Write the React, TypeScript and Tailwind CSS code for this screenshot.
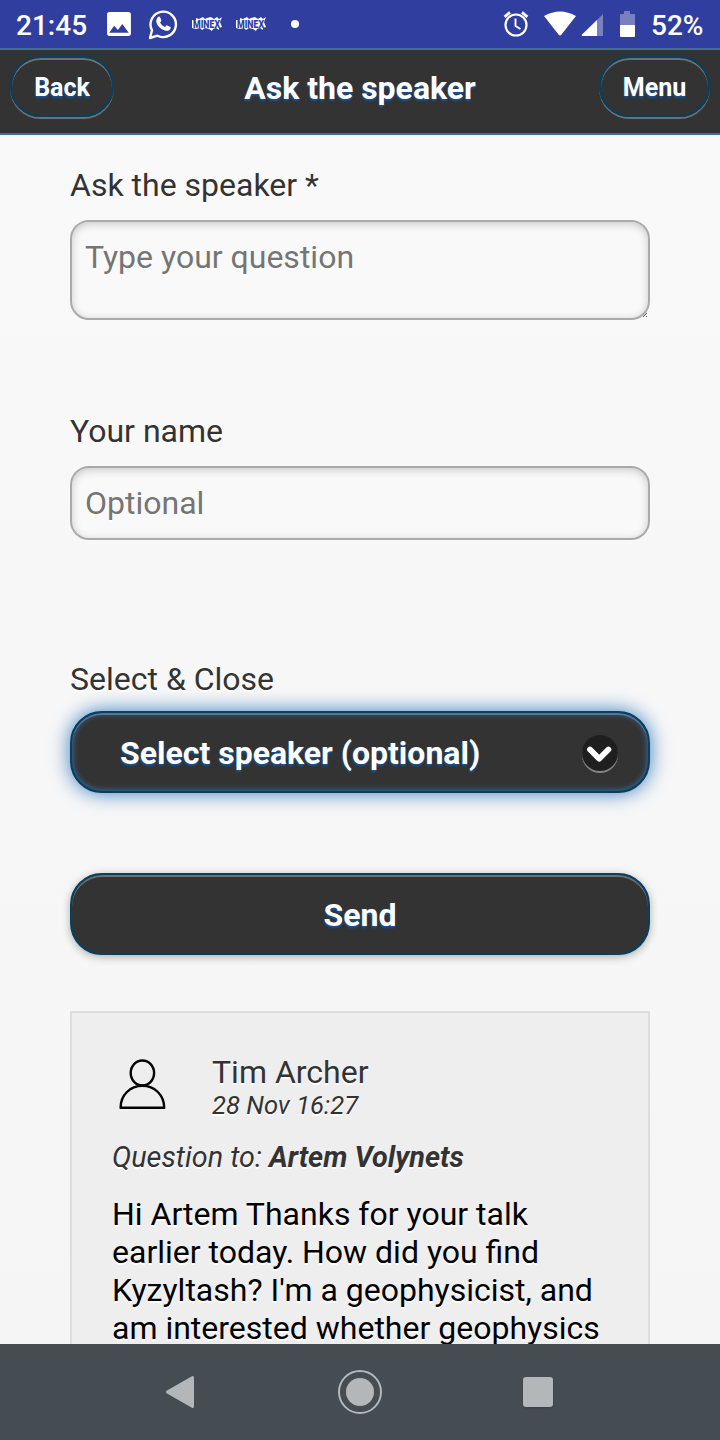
import React from "react";

const darkShadow = "[text-shadow:0_2px_2px_#145399]";
const lightShadow = "[text-shadow:0_2px_0_#fff]";

function MinexIcon() {
  return (
    <svg className="overflow-visible" width="32" height="16" viewBox="0 0 32 16">
      <path d="M1 4H5V2L8 3 12 1 14 3 16 2 20 1 23 3 26 1 28 3 31 1 29 6 31 11 28 12 28 14 25 12 22 13 21 15 18 13 14 12 11 14 9 12 5 13 1 12Z" fill="#fff" />
      <text x="2" y="11.500" fontFamily="Roboto, sans-serif" fontWeight="900" fontSize="10.500" textLength="27" lengthAdjust="spacingAndGlyphs" fill="#303f9f">MINEX</text>
    </svg>
  );
}

function StatusBar() {
  return (
    <div className="flex h-12 shrink-0 items-center bg-[#303f9f] text-white">
      <div className="ml-4 w-[72px] pt-[3px] text-[28px] leading-[34px] font-medium whitespace-nowrap">21:45</div>
      <svg className="ml-[18px]" width="26" height="26" viewBox="0 0 24 24" fill="#fff">
        <path d="M23 21V3c0-1.100-.9-2-2-2H3C1.900 1 1 1.900 1 3v18c0 1.100.9 2 2 2h18c1.100 0 2-.9 2-2zM7.500 13.500l3.500 4 4-5.500L21 20H3z" />
      </svg>
      <svg className="ml-4" width="30" height="32" viewBox="0 0 30 32" fill="none">
        <path d="M2 30 4 22.300A12.700 12.700 0 1 1 9.500 27.700Z" stroke="#fff" strokeWidth="2.400" strokeLinejoin="round" />
        <path d="M9.800 9.200c.7-.8 1.900-.8 2.300.1l1.200 2.900c.2.500-.1 1-1.200 2.200 1.100 2.100 2.800 3.600 5 4.600 1.300-1.700 1.600-1.900 2.200-1.600l2.700 1.300c.8.400.8.700.6 1.500-.7 2.300-3.200 3.100-5.700 2.300-4.300-1.300-7-4.300-8.300-7.600-.7-2-.3-4.200 1.200-5.700Z" fill="#fff" />
      </svg>
      <div className="ml-[13px] flex gap-3"><MinexIcon /><MinexIcon /></div>
      <div className="ml-6 size-2 rounded-full bg-white" />
      <svg className="ml-auto" width="26" height="28" viewBox="0 0 26 28" fill="none" stroke="#fff">
        <circle cx="13" cy="15" r="10.500" strokeWidth="2.200" />
        <path d="M12.500 8.500V16L17.500 19" strokeWidth="1.900" />
        <path d="M1.600 6.800 7 2.300M24.400 6.800 19 2.300" strokeWidth="2.800" />
      </svg>
      <svg className="ml-[15px]" width="32" height="26" viewBox="0 0 32 26">
        <path d="M0 5Q16-4 32 5L17.500 23.500Q16 25.500 14.500 23.500Z" fill="#fff" />
      </svg>
      <svg className="mt-[2px] ml-[5px]" width="23" height="24" viewBox="0 0 23 24">
        <path d="M22 1v22h-6V7Z" fill="#7980bd" />
        <path d="M16 7v16H1.500Q0 22.500 1 21.500Z" fill="#fff" />
      </svg>
      <svg className="ml-4" width="15" height="27" viewBox="0 0 15 27">
        <path d="M0 4q0-1 1-1h3V0h6v3h4q1 0 1 1v10H0Z" fill="#7980bd" />
        <path d="M0 14h15v11q0 1-1 1H1q-1 0-1-1Z" fill="#fff" />
      </svg>
      <div className="mr-4 ml-4 w-[53px] pt-[3px] text-[28px] leading-[34px] font-medium whitespace-nowrap">52%</div>
    </div>
  );
}

function HeaderButton({ label, className }: { label: string; className: string }) {
  return (
    <button className={`mt-[6px] h-[61px] rounded-[31px] border-2 border-[#044062] pt-[2px] text-[25px] font-bold shadow-[0_2px_0_rgba(255,255,255,0.3),inset_0_2px_0_rgba(255,255,255,0.3)] ${darkShadow} ${className}`}>
      {label}
    </button>
  );
}

function Header() {
  return (
    <header className="flex h-[87px] shrink-0 items-start justify-between border-y-2 border-[#456f9a] bg-[#333] px-[10px] text-white">
      <HeaderButton label="Back" className="w-[104px]" />
      <h1 className={`mt-[19px] ml-[7px] text-[32px] leading-[38px] font-bold ${darkShadow}`}>Ask the speaker</h1>
      <HeaderButton label="Menu" className="w-[111px]" />
    </header>
  );
}

const fieldClass = `block w-full rounded-[19px] border-2 border-[#aaa] bg-[#f9f9f9] px-[13px] text-[32px] leading-[38px] text-[#333] shadow-[inset_0_2px_8px_rgba(0,0,0,0.2)] outline-none placeholder:text-[#757575] ${lightShadow}`;

export default function App() {
  return (
    <div className="flex h-[1440px] w-[720px] flex-col overflow-hidden bg-[#f9f9f9] font-[Roboto,sans-serif]">
      <StatusBar />
      <Header />
      <main className={`min-h-0 flex-1 overflow-hidden bg-linear-to-b from-[#f9f9f9] to-[#f5f5f5] px-[70px] pt-[31px] text-[32px] leading-[38px] text-[#333] ${lightShadow}`}>
        <label className="block h-[54px]">Ask the speaker *</label>
        <div className="relative">
          <textarea className={`${fieldClass} h-[100px] resize-none pt-[16px]`} placeholder="Type your question" />
          <svg className="absolute right-[3px] bottom-[3px]" width="4" height="4" viewBox="0 0 4 4" shapeRendering="crispEdges">
            <path d="M0 3h1v1H0zM1 2h1v1H1zM2 1h1v1H2zM3 0h1v1H3zM3 3h1v1H3z" fill="#555" />
          </svg>
        </div>
        <label className="mt-[92px] block h-[54px]">Your name</label>
        <input className={`${fieldClass} h-[74px]`} placeholder="Optional" />
        <label className="mt-[120px] block h-[51px]">Select &amp; Close</label>
        <button className={`flex h-[82px] w-full items-center rounded-[32px] border-2 border-[#044062] bg-[#333] pt-[2px] pr-[30px] pl-[48px] text-left font-bold text-white shadow-[inset_0_0_6px_#387bbe,0_0_20px_#387bbe,inset_0_2px_0_rgba(255,255,255,0.3)] ${darkShadow}`}>
          <span className="flex-1">Select speaker (optional)</span>
          <span className="flex size-9 items-center justify-center rounded-full bg-[#1f1f1f] shadow-[0_2px_0_rgba(255,255,255,0.4)]">
            <svg width="36" height="36" viewBox="0 0 36 36" fill="none">
              <path d="m8 14.500 9.200 9.200 9.200-9.200" stroke="#fff" strokeWidth="5.800" strokeLinejoin="round" strokeLinecap="round" />
            </svg>
          </span>
        </button>
        <button className={`mt-20 block h-[82px] w-full rounded-[32px] border-2 border-[#044062] bg-[#333] pt-[2px] font-bold text-white shadow-[0_2px_8px_rgba(0,0,0,0.3),inset_0_2px_0_rgba(255,255,255,0.3)] ${darkShadow}`}>
          Send
        </button>
        <article className="mt-14 h-[400px] border-2 border-[#ddd] bg-[#eee] px-10 pt-[40px]">
          <div className="flex h-[66px]">
            <svg className="mt-[6px] ml-[7px]" width="47" height="51" viewBox="0 0 47 51" fill="none" stroke="#000" strokeWidth="2.400">
              <ellipse cx="23.400" cy="14" rx="11.700" ry="12.500" />
              <path d="M1.600 48.800C1.600 36 11.200 26.800 23.400 26.800S45.200 36 45.200 48.800Z" strokeLinejoin="round" />
            </svg>
            <div className="ml-[46px]">
              <div>Tim Archer</div>
              <div className="text-[25.6px] leading-[29px] italic">28 Nov 16:27</div>
            </div>
          </div>
          <p className="mt-[20px] text-[28.8px] leading-[36px] italic">
            Question to: <strong className="font-bold">Artem Volynets</strong>
          </p>
          <p className="mt-[20px] text-black">
            Hi Artem Thanks for your talk<br />earlier today. How did you find<br />Kyzyltash? I'm a geophysicist, and<br />am interested whether geophysics
          </p>
        </article>
      </main>
      <nav className="flex h-24 shrink-0 items-center bg-[#454d52]">
        <svg className="ml-[165px]" width="30" height="34" viewBox="0 0 30 34"><path d="M2 15.500 26.500 1.500Q29-.2 29 3v28q0 3.200-2.500 1.500L2 18.500Q-.3 17 2 15.500Z" fill="#b3b7b9" /></svg>
        <svg className="ml-[143px]" width="44" height="44" viewBox="0 0 44 44"><circle cx="22" cy="22" r="21" fill="none" stroke="#b3b7b9" strokeWidth="2" /><circle cx="22" cy="22" r="14" fill="#b3b7b9" /></svg>
        <div className="ml-[141px] size-[30px] rounded-[3px] bg-[#b3b7b9] shadow-[0_1px_2px_#0003]" />
      </nav>
    </div>
  );
}
